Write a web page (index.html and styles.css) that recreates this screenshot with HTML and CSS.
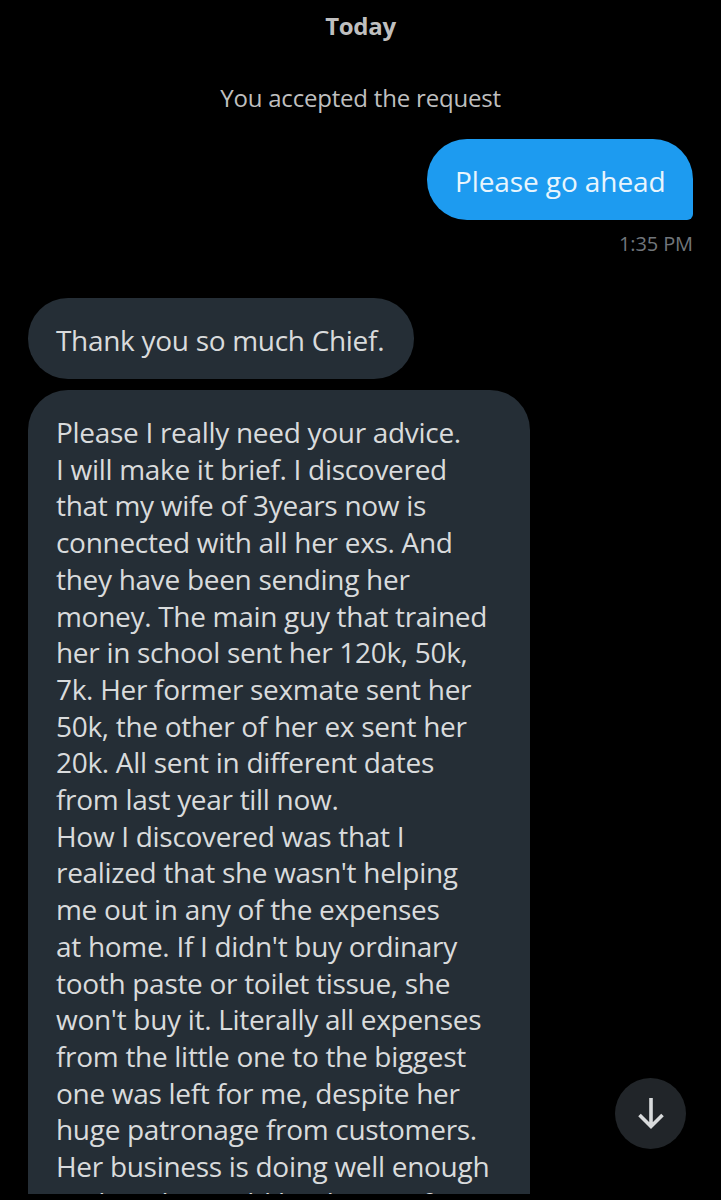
FILE: index.html
```html
<!DOCTYPE html>
<html lang="en">
<head>
    <meta charset="UTF-8">
    <meta name="viewport" content="width=device-width, initial-scale=1.0">
    <title>Messages</title>
    <link rel="stylesheet" href="styles.css">
</head>
<body>
    <main class="chat">
        <div class="date">Today</div>
        <div class="notice">You accepted the request</div>
        <div class="bubble sent">Please go ahead</div>
        <div class="time">1:35 PM</div>
        <div class="bubble received">Thank you so much Chief.</div>
        <div class="bubble received long">Please I really need your advice.<br>
            I will make it brief. I discovered<br>
            that my wife of 3years now is<br>
            connected with all her exs. And<br>
            they have been sending her<br>
            money. The main guy that trained<br>
            her in school sent her 120k, 50k,<br>
            7k. Her former sexmate sent her<br>
            50k, the other of her ex sent her<br>
            20k. All sent in different dates<br>
            from last year till now.<br>
            How I discovered was that I<br>
            realized that she wasn't helping<br>
            me out in any of the expenses<br>
            at home. If I didn't buy ordinary<br>
            tooth paste or toilet tissue, she<br>
            won't buy it. Literally all expenses<br>
            from the little one to the biggest<br>
            one was left for me, despite her<br>
            huge patronage from customers.<br>
            Her business is doing well enough<br>
            and so she could be the one for</div>
    </main>
    <button class="scroll-down" aria-label="Scroll to bottom">
        <svg width="26" height="32" viewBox="0 0 26 32">
            <path d="M13 0v29M1.500 17L13 28.500 24.500 17" fill="none" stroke="#d9dbdc" stroke-width="3.600"/>
        </svg>
    </button>
</body>
</html>
```
FILE: styles.css
```css
* {
    box-sizing: border-box;
}
body {
    margin: 0;
    height: 1200px;
    overflow: hidden;
    background-color: #000;
    font-family: "Open Sans", sans-serif;
}
.chat {
    display: flex;
    flex-direction: column;
    align-items: flex-start;
    height: 1194px;
    padding: 10px 28px 0;
    overflow: hidden;
}
.date,
.notice {
    align-self: center;
    color: #bfbfbf;
    font-size: 24px;
    line-height: 32px;
    white-space: nowrap;
}
.date {
    font-weight: 700;
    letter-spacing: -0.3px;
}
.notice {
    margin-top: 40px;
    letter-spacing: -0.2px;
}
.bubble {
    flex-shrink: 0;
    padding: 24px 28px 20px;
    border-radius: 40px;
    font-size: 28px;
    letter-spacing: -0.3px;
    line-height: 36.7px;
    white-space: nowrap;
}
.sent {
    align-self: flex-end;
    width: 266px;
    height: 81px;
    margin-top: 25px;
    border-bottom-right-radius: 6px;
    background-color: #1d9bf0;
    color: #e8f5fd;
    letter-spacing: -0.1px;
}
.time {
    align-self: flex-end;
    margin-top: 9px;
    color: #71767b;
    font-size: 20px;
    letter-spacing: -0.1px;
    line-height: 30px;
}
.received {
    width: 386px;
    height: 81px;
    margin-top: 39px;
    background-color: #252e36;
    color: #d9dbdc;
}
.long {
    width: 502px;
    height: auto;
    margin-top: 11px;
}
.scroll-down {
    position: fixed;
    right: 35px;
    bottom: 51px;
    display: flex;
    align-items: center;
    justify-content: center;
    width: 71px;
    height: 71px;
    padding: 0;
    border: none;
    border-radius: 50%;
    background-color: #212529;
}
```
